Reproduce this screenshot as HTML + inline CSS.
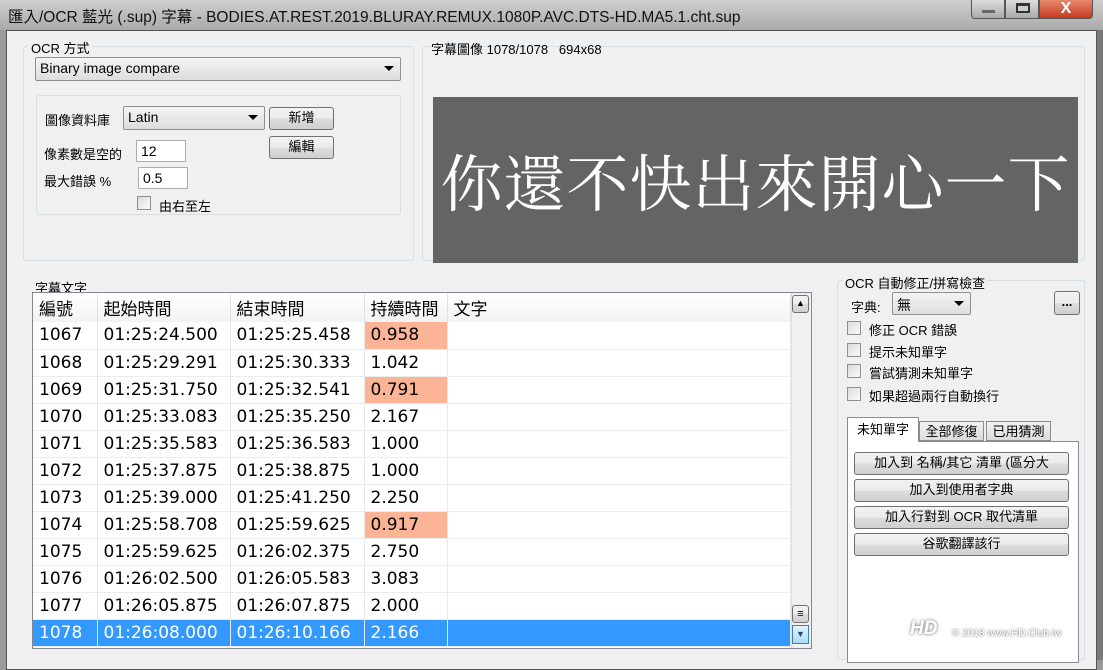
<!DOCTYPE html>
<html><head><meta charset="utf-8"><style>
*{box-sizing:border-box;margin:0;padding:0}
body{width:1103px;height:660px;overflow:hidden;background:#9a9a9a;font-family:"Liberation Sans","Noto Sans CJK TC",sans-serif;font-size:13px;color:#000;position:relative}
.a{position:absolute}
.title{left:0;top:0;width:1103px;height:30px;background:linear-gradient(#cfcfcf,#b9b9b9 60%,#a9a9a9);}
.win{left:6px;top:30px;width:1091px;height:640px;background:#f0f0f0;border:1px solid #555}
.grp{border:1px solid #d5dfe5;border-radius:3px}
.lbl{background:#f0f0f0;padding:0 2px;font-size:13px}
.combo{border:1px solid #8e8f8f;border-radius:2px;background:linear-gradient(#f4f4f4,#dedede);height:22px;padding:2px 4px;font-size:14px}
.combo:after{content:"";position:absolute;right:6px;top:8px;border:5px solid transparent;border-top:5px solid #000;border-bottom:0}
.btn{border:1px solid #707070;border-radius:3px;background:linear-gradient(#f2f2f2,#ebebeb 50%,#dddddd 51%,#cfcfcf);text-align:center;font-size:13px;line-height:20px}
.cb{width:14px;height:14px;border:1px solid #8f8f8f;background:linear-gradient(135deg,#dcdcdc,#fafafa)}
.spin{border:1px solid #abadb3;background:#fff;height:22px;font-size:14px;padding:2px 4px}
table{border-collapse:collapse;font-size:17px;font-family:"DejaVu Sans","Noto Sans CJK TC",sans-serif}
td{height:27px;border-right:1px solid #e8e8e8;border-bottom:1px solid #ececec;padding-left:6px;white-space:nowrap}
th{height:29px;font-weight:normal;text-align:left;padding-left:6px;border-right:1px solid #e0e0e0;background:linear-gradient(#fff,#f3f3f3);font-size:17px}
.o{background:#fbb496}
tr.sel td{background:#3399ff;color:#fff}
</style></head><body>
<div class="a title"></div>
<div class="a" style="left:8px;top:5px;font-size:15.5px;color:#111">匯入/OCR 藍光 (.sup) 字幕 - BODIES.AT.REST.2019.BLURAY.REMUX.1080P.AVC.DTS-HD.MA5.1.cht.sup</div>
<div class="a" style="left:971px;top:0;width:34px;height:19px;border:1px solid #555;border-top:0;border-radius:0 0 0 4px;background:linear-gradient(#ddd,#aaa)"><div class="a" style="left:10px;top:10px;width:13px;height:3px;background:#666"></div></div>
<div class="a" style="left:1005px;top:0;width:34px;height:19px;border:1px solid #555;border-top:0;background:linear-gradient(#ddd,#aaa)"><div class="a" style="left:10px;top:3px;width:14px;height:10px;border:2px solid #333;border-top-width:3px;background:#ccc"></div></div>
<div class="a" style="left:1039px;top:0;width:54px;height:19px;border:1px solid #555;border-top:0;border-radius:0 0 4px 0;background:linear-gradient(#e88a70,#c73a1e);color:#fff;font-weight:bold;text-align:center;font-size:16px;line-height:17px">X</div>
<div class="a win"></div>
<div class="a grp" style="left:23px;top:46px;width:391px;height:215px"></div>
<div class="a lbl" style="left:29px;top:38px">OCR 方式</div>
<div class="a combo" style="left:35px;top:57px;width:366px;height:24px">Binary image compare</div>
<div class="a grp" style="left:36px;top:95px;width:365px;height:120px"></div>
<div class="a" style="left:45px;top:110px">圖像資料庫</div>
<div class="a combo" style="left:123px;top:106px;width:142px;height:24px">Latin</div>
<div class="a btn" style="left:269px;top:107px;width:65px;height:23px">新增</div>
<div class="a btn" style="left:269px;top:136px;width:65px;height:23px">編輯</div>
<div class="a" style="left:44px;top:144px">像素數是空的</div>
<div class="a spin" style="left:136px;top:140px;width:50px">12</div>
<div class="a" style="left:44px;top:171px">最大錯誤 %</div>
<div class="a spin" style="left:138px;top:167px;width:50px">0.5</div>
<div class="a cb" style="left:137px;top:196px"></div>
<div class="a" style="left:159px;top:196px">由右至左</div>
<div class="a grp" style="left:422px;top:46px;width:663px;height:215px"></div>
<div class="a" style="left:431px;top:39px">字幕圖像 1078/1078&nbsp;&nbsp;&nbsp;694x68</div>
<div class="a" style="left:433px;top:97px;width:645px;height:166px;background:#646464;color:#fff;font-family:'Noto Serif CJK SC',serif;font-size:62px;line-height:166px;text-align:center;letter-spacing:1px;white-space:nowrap;overflow:hidden">你還不快出來開心一下</div>
<div class="a" style="left:35px;top:278px;font-size:13px">字幕文字</div>
<div class="a" style="left:32px;top:292px;width:780px;height:357px;border:1px solid #828790;background:#fff;overflow:hidden">
<table style="width:758px">
<tr><th style="width:64px">編號</th><th style="width:133px">起始時間</th><th style="width:134px">結束時間</th><th style="width:83px">持續時間</th><th>文字</th></tr>
<tr><td>1067</td><td>01:25:24.500</td><td>01:25:25.458</td><td class="o">0.958</td><td></td></tr>
<tr><td>1068</td><td>01:25:29.291</td><td>01:25:30.333</td><td>1.042</td><td></td></tr>
<tr><td>1069</td><td>01:25:31.750</td><td>01:25:32.541</td><td class="o">0.791</td><td></td></tr>
<tr><td>1070</td><td>01:25:33.083</td><td>01:25:35.250</td><td>2.167</td><td></td></tr>
<tr><td>1071</td><td>01:25:35.583</td><td>01:25:36.583</td><td>1.000</td><td></td></tr>
<tr><td>1072</td><td>01:25:37.875</td><td>01:25:38.875</td><td>1.000</td><td></td></tr>
<tr><td>1073</td><td>01:25:39.000</td><td>01:25:41.250</td><td>2.250</td><td></td></tr>
<tr><td>1074</td><td>01:25:58.708</td><td>01:25:59.625</td><td class="o">0.917</td><td></td></tr>
<tr><td>1075</td><td>01:25:59.625</td><td>01:26:02.375</td><td>2.750</td><td></td></tr>
<tr><td>1076</td><td>01:26:02.500</td><td>01:26:05.583</td><td>3.083</td><td></td></tr>
<tr><td>1077</td><td>01:26:05.875</td><td>01:26:07.875</td><td>2.000</td><td></td></tr>
<tr class="sel"><td>1078</td><td>01:26:08.000</td><td>01:26:10.166</td><td>2.166</td><td></td></tr>
</table>
<div class="a" style="left:758px;top:0;width:20px;height:356px;background:#f0f0f0;border-left:1px solid #e0e0e0"></div>
<div class="a btn" style="left:759px;top:2px;width:17px;height:18px;line-height:14px;font-size:9px">▲</div>
<div class="a btn" style="left:759px;top:312px;width:17px;height:18px;line-height:16px;font-size:11px">≡</div>
<div class="a" style="left:759px;top:332px;width:17px;height:19px;border:1px solid #3c7fb1;background:linear-gradient(#e3f4fc,#a9dbf6);color:#1d4f7c;font-size:9px;text-align:center;line-height:17px">▼</div>
</div>
<div class="a grp" style="left:837px;top:280px;width:248px;height:380px"></div>
<div class="a lbl" style="left:843px;top:273px">OCR 自動修正/拼寫檢查</div>
<div class="a" style="left:851px;top:297px">字典:</div>
<div class="a combo" style="left:892px;top:292px;width:79px;height:23px">無</div>
<div class="a btn" style="left:1054px;top:291px;width:26px;height:24px;font-weight:bold">...</div>
<div class="a cb" style="left:847px;top:321px"></div><div class="a" style="left:869px;top:320px">修正 OCR 錯誤</div>
<div class="a cb" style="left:847px;top:343px"></div><div class="a" style="left:869px;top:342px">提示未知單字</div>
<div class="a cb" style="left:847px;top:364px"></div><div class="a" style="left:869px;top:363px">嘗試猜測未知單字</div>
<div class="a cb" style="left:847px;top:387px"></div><div class="a" style="left:869px;top:386px">如果超過兩行自動換行</div>
<div class="a" style="left:847px;top:441px;width:232px;height:222px;border:1px solid #898c95;background:#fff"></div>
<div class="a" style="left:847px;top:417px;width:72px;height:25px;border:1px solid #898c95;border-bottom:0;background:#fff;text-align:center;line-height:24px">未知單字</div>
<div class="a" style="left:919px;top:421px;width:65px;height:20px;border:1px solid #898c95;background:linear-gradient(#f2f2f2,#dcdcdc);text-align:center;line-height:20px">全部修復</div>
<div class="a" style="left:986px;top:421px;width:65px;height:20px;border:1px solid #898c95;background:linear-gradient(#f2f2f2,#dcdcdc);text-align:center;line-height:20px">已用猜測</div>
<div class="a btn" style="left:854px;top:452px;width:215px;height:23px;overflow:hidden">加入到 名稱/其它 清單 (區分大</div>
<div class="a btn" style="left:854px;top:479px;width:215px;height:23px">加入到使用者字典</div>
<div class="a btn" style="left:854px;top:506px;width:215px;height:23px">加入行對到 OCR 取代清單</div>
<div class="a btn" style="left:854px;top:533px;width:215px;height:23px">谷歌翻譯該行</div>
<div class="a" style="left:910px;top:618px;font-weight:bold;color:#fff;font-size:19px;text-shadow:0 0 3px #555;font-style:italic">HD</div>
<div class="a" style="left:952px;top:628px;color:#fff;font-size:10px;text-shadow:0 0 2px #444">© 2018 www.HD.Club.tw</div>
<div class="a" style="left:1097px;top:30px;width:6px;height:630px;background:#7a7a7a"></div>
</body></html>
